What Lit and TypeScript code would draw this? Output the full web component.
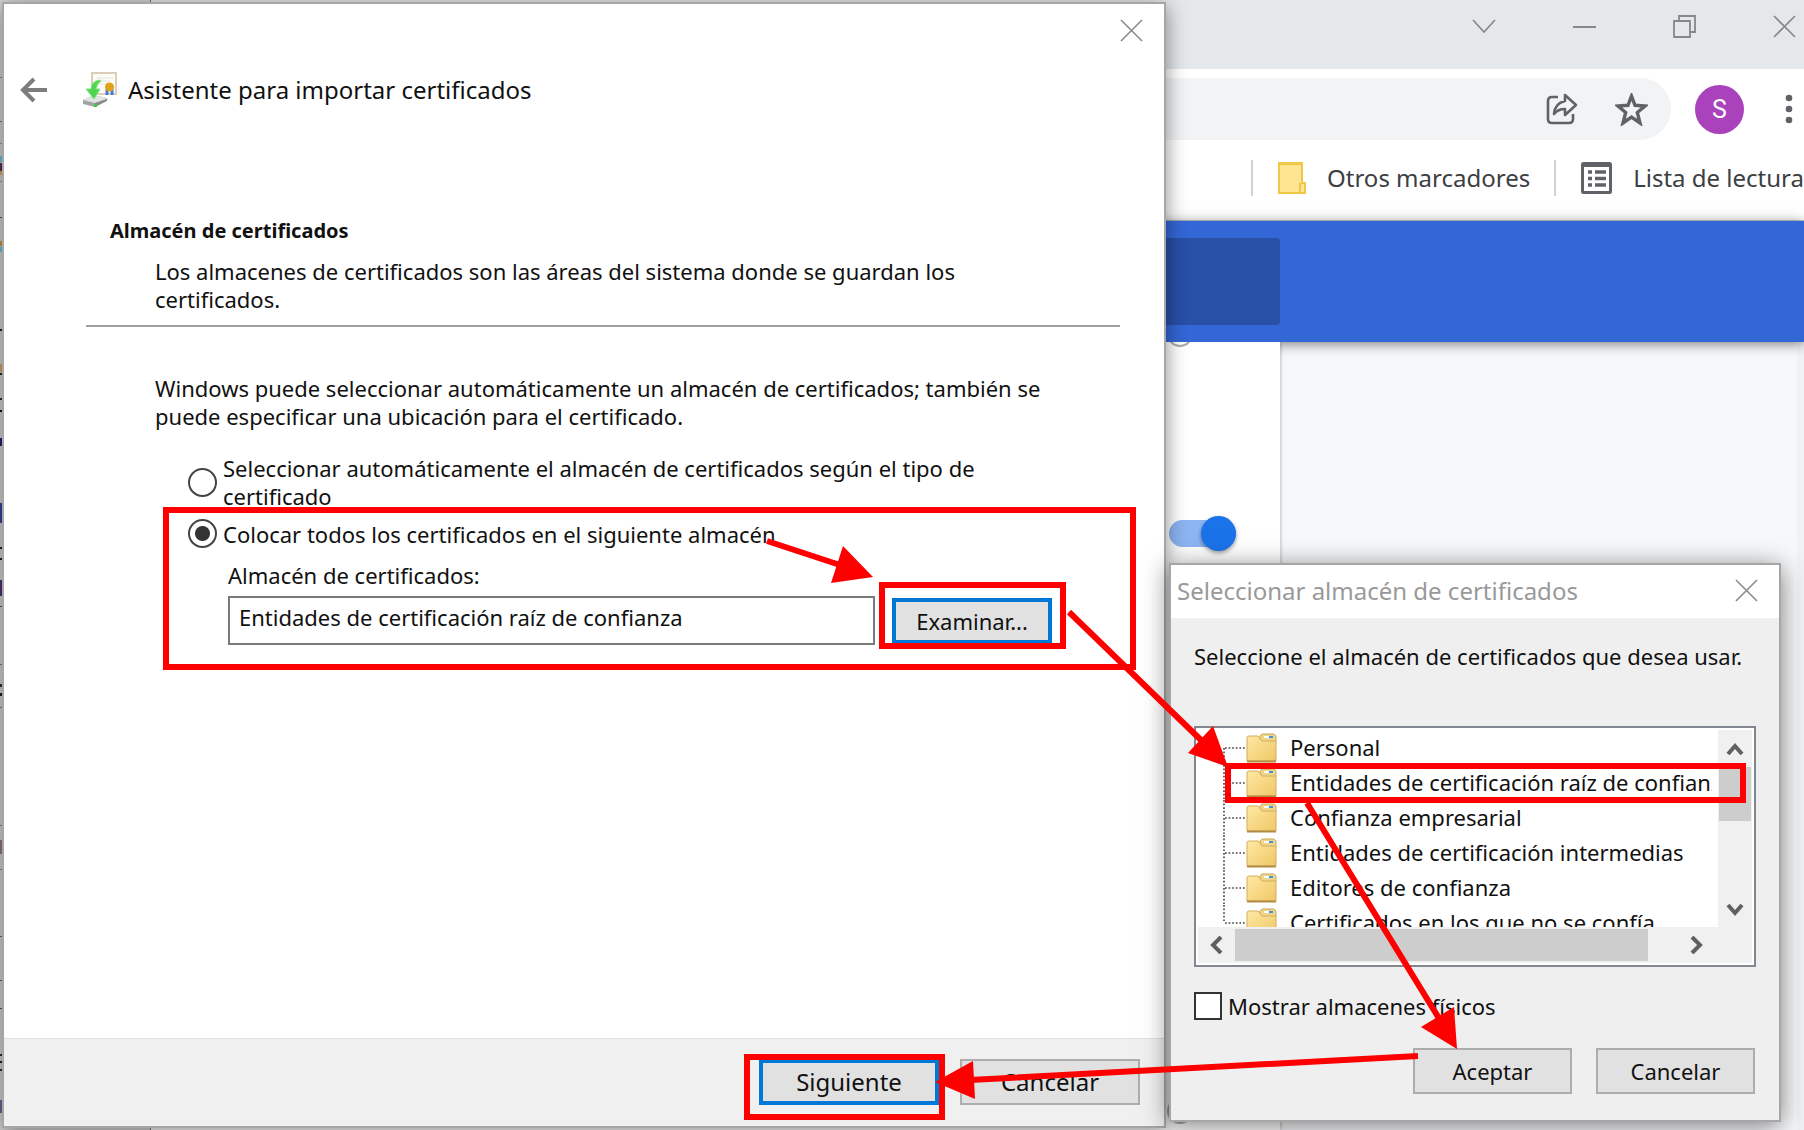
import { LitElement, html, css, svg } from "lit";
import { customElement, property } from "lit/decorators.js";

const closeIcon = html`<svg class="glyph" width="23" height="23" viewBox="0 0 23 23" aria-hidden="true">
  <path d="M1 1L22 22M22 1L1 22" fill="none" stroke="currentColor" stroke-width="1.6" />
</svg>`;

/* Edge of the document window that lies behind the wizard: [y, height, colour]. */
const edgeMarks: [number, number, string][] = [
  [77, 1, "#888"], [121, 1, "#777"], [143, 1, "#999"], [156, 6, "#6bc4dc"], [163, 8, "#63304a"],
  [171, 4, "#d9a860"], [181, 1, "#999"], [217, 1, "#555"], [241, 5, "#cf9443"], [247, 5, "#6bc4dc"],
  [329, 2, "#222"], [364, 8, "#cfa765"], [373, 2, "#222"], [398, 2, "#333"], [410, 2, "#111"],
  [438, 8, "#27246e"], [503, 20, "#3d42a0"], [547, 2, "#222"], [558, 2, "#222"], [580, 16, "#503070"],
  [606, 1, "#555"], [664, 1, "#777"], [684, 3, "#333"], [693, 3, "#222"], [707, 1, "#777"],
  [825, 1, "#888"], [840, 14, "#8f7a80"], [869, 1, "#888"], [936, 1, "#666"], [980, 1, "#666"],
  [1008, 1, "#555"], [1054, 2, "#333"], [1061, 2, "#222"], [1069, 2, "#333"], [1100, 13, "#6b6a90"],
];

@customElement("browser-window")
class BrowserWindow extends LitElement {
  static styles = css`
    :host {
      display: flex;
      flex-direction: column;
      min-height: 100vh;
      font-family: "Noto Sans", "Open Sans", sans-serif;
      color: #3c4043;
    }
    button {
      display: grid;
      place-items: center;
      padding: 0;
      border: 0;
      background: none;
      color: inherit;
      font: inherit;
    }
    svg { display: block; }
    .tabs {
      display: flex;
      justify-content: flex-end;
      gap: 77px;
      height: 69px;
      padding: 15px 8px 0 0;
      box-sizing: border-box;
      background: #e4e8eb;
      color: #858789;
      align-items: flex-start;
    }
    .toolbar {
      display: flex;
      align-items: center;
      height: 80px;
      background: #fff;
      color: #5f6368;
    }
    .address {
      flex: 1;
      display: flex;
      justify-content: flex-end;
      align-items: center;
      gap: 37px;
      height: 62px;
      padding-right: 23px;
      box-sizing: border-box;
      border-radius: 0 31px 31px 0;
      background: #f1f3f4;
    }
    .avatar {
      width: 49px;
      height: 49px;
      margin: 0 41px 0 24px;
      border-radius: 50%;
      background: #aa42bc;
      color: #fff;
      font-family: Roboto, sans-serif;
      font-size: 25px;
    }
    .menu { margin-right: 11px; }
    .bookmarks {
      display: flex;
      justify-content: flex-end;
      align-items: center;
      height: 72px;
      padding-bottom: 14px;
      box-sizing: border-box;
      border-bottom: 1px solid #c4c8cc;
      background: #fff;
      font-size: 24px;
      line-height: 32px;
      white-space: nowrap;
    }
    .bookmarks a {
      display: flex;
      align-items: center;
      gap: 21px;
      padding: 0 0 0 25px;
      height: 36px;
      box-sizing: border-box;
      border-left: 2px solid #d0d2d5;
      color: inherit;
      text-decoration: none;
    }
    .bookmarks .others { margin-right: 24px; }
    .appbar {
      position: relative;
      height: 121px;
      padding: 17px 0;
      box-sizing: border-box;
      background: #3367d6;
      box-shadow: 0 2px 12px rgba(0, 0, 0, 0.5);
    }
    .search {
      width: calc(100% - 524px);
      height: 87px;
      border-radius: 0 4px 4px 0;
      background: #2850a7;
    }
    .page {
      flex: 1;
      display: flex;
      background: #f7f8fa;
    }
    .card {
      flex: 1;
      display: flex;
      flex-direction: column;
      align-items: flex-end;
      background: #fff;
      box-shadow: 0 0 4px rgba(0, 0, 0, 0.35);
      clip-path: inset(0 -4px 0 0);
    }
    .ring {
      width: 26px;
      height: 26px;
      box-sizing: border-box;
      margin: -21px 87px 0 0;
      border: 2px solid #a9abae;
      border-radius: 50%;
    }
    .ring.last { margin: auto 87px 6px 0; }
    .switch {
      appearance: none;
      display: flex;
      flex: none;
      align-items: center;
      justify-content: flex-end;
      width: 67px;
      height: 27px;
      margin: 173px 44px 0 0;
      border-radius: 14px;
      background: #8cb5f2;
    }
    .switch::before {
      content: "";
      flex: none;
      width: 35px;
      height: 35px;
      border-radius: 50%;
      background: #1a73e8;
      box-shadow: 0 2px 4px rgba(0, 0, 0, 0.4);
    }
    .side {
      width: 524px;
      box-sizing: border-box;
      border-right: 7px solid #f1f2f3;
    }
  `;

  render() {
    return html`
      <div class="tabs">
        <button aria-label="Buscar pestañas"><svg width="24" height="23" viewBox="0 0 24 23"><path d="M1 5L12 17L23 5" fill="none" stroke="currentColor" stroke-width="1.6" /></svg></button>
        <button aria-label="Minimizar"><svg width="23" height="23" viewBox="0 0 23 23"><path d="M0 12H23" stroke="currentColor" stroke-width="2" /></svg></button>
        <button aria-label="Restaurar"><svg width="23" height="23" viewBox="0 0 23 23"><path d="M1 6H17V22H1ZM6 6V1H22V17H17" fill="none" stroke="currentColor" stroke-width="1.8" /></svg></button>
        <button aria-label="Cerrar">${closeIcon}</button>
      </div>
      <div class="toolbar">
        <div class="address">
          <button aria-label="Compartir"><svg width="32" height="32" viewBox="0 0 32 32"><path d="M12 4H6Q2 4 2 8V26Q2 30 6 30H23Q27 30 27 26V21" fill="none" stroke="currentColor" stroke-width="2.6" /><path d="M19 2L30 12L19 22V16Q12 16 8 21Q9 10 19 8Z" fill="none" stroke="currentColor" stroke-width="2.6" stroke-linejoin="round" /></svg></button>
          <button aria-label="Añadir a marcadores"><svg width="33" height="33" viewBox="0 0 33 33"><path d="M16.5 3L20 12.300L30 13L22.300 19.500L25 30L16.500 24L8 30L10.700 19.500L3 13L13 12.300Z" fill="none" stroke="currentColor" stroke-width="3.400" /></svg></button>
        </div>
        <button class="avatar" aria-label="Perfil">S</button>
        <button class="menu" aria-label="Menú"><svg width="8" height="32" viewBox="0 0 8 32"><g fill="currentColor"><circle cx="4" cy="5" r="3.300" /><circle cx="4" cy="16" r="3.300" /><circle cx="4" cy="27" r="3.300" /></g></svg></button>
      </div>
      <nav class="bookmarks">
        <a class="others" href="#otros"><svg width="28" height="32" viewBox="0 0 28 32"><path d="M1 1H24V21H27V31H1Z" fill="#fee591" stroke="#efc84a" stroke-width="2" /><path d="M1 2H24" stroke="#efc84a" stroke-width="2.500" /><path d="M22 30V22H24" fill="none" stroke="#efc84a" stroke-width="2" /></svg>Otros marcadores</a>
        <a href="#lectura"><svg width="31" height="32" viewBox="0 0 31 32"><rect x="1.500" y="1.500" width="28" height="29" rx="1" fill="none" stroke="#5f6368" stroke-width="3" /><path d="M2 3.500H29" stroke="#5f6368" stroke-width="3" /><path d="M7 10H11M14 10H25M7 16.500H11M14 16.500H25M7 23H11M14 23H25" stroke="#5f6368" stroke-width="3.400" /></svg>Lista de lectura</a>
      </nav>
      <div class="appbar"><div class="search"></div></div>
      <div class="page">
        <div class="card">
          <div class="ring"></div>
          <input class="switch" type="checkbox" checked aria-label="Activar" />
          <div class="ring last"></div>
        </div>
        <div class="side"></div>
      </div>
    `;
  }
}

const dialogStyles = css`
  :host {
    box-sizing: border-box;
    font-family: "Noto Sans", "Open Sans", sans-serif;
    font-size: 22px;
    line-height: 28px;
    color: #111;
    border: 2px solid #a6a6a6;
  }
  svg { display: block; }
  p, h1, h2, ul { margin: 0; padding: 0; font-weight: 400; }
  .icon-button {
    padding: 0;
    border: 0;
    background: none;
    color: #8b8b8b;
  }
  .push {
    height: 46px;
    padding: 0;
    box-sizing: border-box;
    border: 2px solid #adadad;
    background: #e1e1e1;
    color: #111;
    font: inherit;
  }
  .push.default { border: 4px solid #0078d7; }
`;

@customElement("import-wizard")
class ImportWizard extends LitElement {
  static styles = [
    dialogStyles,
    css`
      :host {
        display: flex;
        flex-direction: column;
        background: #fff;
        box-shadow: 0 4px 20px rgba(0, 0, 0, 0.45);
      }
      .titlebar {
        display: flex;
        justify-content: flex-end;
        height: 66px;
        padding: 15px 21px 0;
        box-sizing: border-box;
        align-items: flex-start;
      }
      .header {
        display: flex;
        align-items: center;
        height: 40px;
        padding-left: 16px;
      }
      .header h1 {
        font-size: 24px;
        line-height: 32px;
        margin-left: 10px;
      }
      .emblem { margin-left: 34px; }
      .content {
        flex: 1;
        padding: 107px 44px 0 82px;
      }
      .heading {
        padding-left: 24px;
        font-size: 20px;
        font-weight: 700;
      }
      .text { padding: 0 60px 0 69px; }
      .intro { padding-top: 12px; }
      .rule {
        border: 0;
        border-top: 2px solid #a0a0a0;
        margin: 12px 0 47px;
      }
      .options {
        display: flex;
        flex-direction: column;
        gap: 9px;
        padding: 24px 60px 0 102px;
      }
      .option {
        display: flex;
        align-items: center;
        gap: 6px;
      }
      .radio {
        appearance: none;
        flex: none;
        width: 29px;
        height: 29px;
        margin: 0;
        border: 2px solid #444;
        border-radius: 50%;
        background: #fff;
      }
      .radio:checked { background: radial-gradient(circle, #333 7px, #fff 8px); }
      .store {
        display: grid;
        grid-template-columns: 1fr 160px;
        column-gap: 17px;
        row-gap: 7px;
        padding: 13px 68px 0 142px;
        align-items: center;
      }
      .store label { grid-column: 1 / -1; }
      .field {
        width: 100%;
        height: 49px;
        padding: 0 9px 8px;
        box-sizing: border-box;
        border: 2px solid #7a7a7a;
        background: #fff;
        color: #111;
        font: inherit;
      }
      .footer {
        display: flex;
        justify-content: flex-end;
        gap: 21px;
        padding: 20px 24px 21px;
        border-top: 1px solid #dfdfdf;
        background: #f0f0f0;
      }
      .footer .push {
        width: 180px;
        font-size: 24px;
      }
    `,
  ];

  render() {
    return html`
      <div class="titlebar"><button class="icon-button" aria-label="Cerrar">${closeIcon}</button></div>
      <div class="header">
        <button class="icon-button" aria-label="Atrás"><svg width="28" height="26" viewBox="0 0 28 26"><path d="M27 13H3M14 2L3 13L14 24" fill="none" stroke="#7d7d7d" stroke-width="4" /></svg></button>
        <svg class="emblem" width="36" height="36" viewBox="0 0 36 36">
          <rect x="10" y="1" width="24" height="21" fill="#fcfbf8" stroke="#dccfb8" stroke-width="2" />
          <path d="M14 6H31M14 9H28M14 12H25" stroke="#e6e3dc" stroke-width="1" />
          <path d="M1 28L10 24L22 25L26 27L13 35L1 32Z" fill="#a2a5a5" />
          <path d="M1 28L10 24L22 25L25 27L13 31Z" fill="#e2e4e4" />
          <path d="M13 35V31L25 27V29Z" fill="#858989" />
          <path d="M17 8Q9 10 9 17H4L12 27L18 17H14Q15 11 19 9Z" fill="#4fd650" stroke="#7fe37c" stroke-width="1" />
          <path d="M25 17V23M30 17V23" stroke="#3c7ddb" stroke-width="3" />
          <circle cx="27.500" cy="15" r="4.500" fill="#e0a21a" />
          <rect x="12" y="32" width="3" height="3" fill="#3fc84a" />
        </svg>
        <h1>Asistente para importar certificados</h1>
      </div>
      <div class="content">
        <h2 class="heading">Almacén de certificados</h2>
        <p class="text intro">Los almacenes de certificados son las áreas del sistema donde se guardan los certificados.</p>
        <hr class="rule" />
        <p class="text">Windows puede seleccionar automáticamente un almacén de certificados; también se puede especificar una ubicación para el certificado.</p>
        <div class="options">
          <label class="option"><input class="radio" type="radio" name="mode" /><span>Seleccionar automáticamente el almacén de certificados según el tipo de certificado</span></label>
          <label class="option"><input class="radio" type="radio" name="mode" checked /><span>Colocar todos los certificados en el siguiente almacén</span></label>
        </div>
        <div class="store">
          <label for="store">Almacén de certificados:</label>
          <input class="field" id="store" type="text" value="Entidades de certificación raíz de confianza" />
          <button class="push default">Examinar...</button>
        </div>
      </div>
      <div class="footer">
        <button class="push default">Siguiente</button>
        <button class="push">Cancelar</button>
      </div>
    `;
  }
}

@customElement("store-picker")
class StorePicker extends LitElement {
  @property({ attribute: false }) stores: string[] = [
    "Personal",
    "Entidades de certificación raíz de confianza",
    "Confianza empresarial",
    "Entidades de certificación intermedias",
    "Editores de confianza",
    "Certificados en los que no se confía",
  ];

  static styles = [
    dialogStyles,
    css`
      :host {
        display: flex;
        flex-direction: column;
        background: #efefef;
        box-shadow: 0 4px 24px rgba(0, 0, 0, 0.5);
      }
      .titlebar {
        display: flex;
        justify-content: space-between;
        align-items: center;
        height: 53px;
        padding: 0 21px 2px 6px;
        box-sizing: border-box;
        background: #fff;
      }
      .titlebar h1 {
        font-size: 24px;
        line-height: 32px;
        color: #999;
      }
      .body { padding: 24px 23px 0; }
      .frame {
        display: grid;
        grid-template-columns: 1fr 34px;
        grid-template-rows: 197px 36px;
        margin-top: 56px;
        padding: 2px;
        border: 2px solid #828790;
        background: #fff;
      }
      .tree {
        overflow: hidden;
        list-style: none;
        margin-right: 6px;
        padding-left: 25px;
        white-space: nowrap;
      }
      .tree li {
        display: flex;
        align-items: center;
        height: 35px;
        line-height: 35px;
      }
      .tree .folder { margin-right: 13px; }
      .tree li svg { flex: none; }
      .vbar {
        display: flex;
        flex-direction: column;
        align-items: center;
        justify-content: space-between;
        padding: 12px 0 10px;
        background: #f0f0f0;
      }
      .vbar .thumb {
        width: 32px;
        height: 54px;
        margin: 11px 0 auto;
        background: #cdcdcd;
      }
      .hbar {
        grid-column: 1 / -1;
        display: flex;
        align-items: center;
        padding: 0 48px 0 11px;
        background: #f0f0f0;
      }
      .hbar .thumb {
        flex: 1;
        height: 32px;
        margin: 0 42px 0 12px;
        background: #cdcdcd;
      }
      .check {
        display: flex;
        align-items: center;
        gap: 6px;
        margin-top: 25px;
      }
      .check input {
        appearance: none;
        width: 28px;
        height: 28px;
        margin: 0;
        border: 2px solid #333;
        background: #fff;
      }
      .actions {
        display: flex;
        justify-content: flex-end;
        gap: 24px;
        margin-top: 28px;
        padding-right: 1px;
      }
      .actions .push { width: 159px; }
    `,
  ];

  private arrow(points: string, w: number, h: number) {
    return html`<svg width=${w} height=${h} viewBox="0 0 ${w} ${h}" aria-hidden="true"><path d=${points} fill="none" stroke="#606060" stroke-width="4" /></svg>`;
  }

  render() {
    return html`
      <div class="titlebar">
        <h1>Seleccionar almacén de certificados</h1>
        <button class="icon-button" aria-label="Cerrar">${closeIcon}</button>
      </div>
      <div class="body">
        <p>Seleccione el almacén de certificados que desea usar.</p>
        <div class="frame">
          <ul class="tree" role="tree" aria-label="Almacenes">
            ${this.stores.map(
              (name, i) => html`<li role="treeitem">
                <svg width="23" height="35" viewBox="0 0 23 35"><path d="M1 ${i === 0 ? 18 : 0}V${i === this.stores.length - 1 ? 18 : 35}M2 18H23" fill="none" stroke="#444" stroke-width="1.600" stroke-dasharray="1.700 1.900" /></svg>
                <svg class="folder" width="31" height="30" viewBox="0 0 31 30">
                  <defs><linearGradient id="f" x1="0" y1="0" x2="1" y2="1"><stop offset="0" stop-color="#ffe9a4" /><stop offset="1" stop-color="#efc766" /></linearGradient></defs>
                  <path d="M14 9V3L16 1H28L30 3V9Z" fill="#efd58c" stroke="#cda957" />
                  <rect x="18" y="3" width="5" height="2" fill="#fff" /><rect x="23" y="3" width="4" height="2" fill="#3d93dd" />
                  <path d="M1 4L3 3H12L16 8H30V28H1Z" fill="url(#f)" stroke="#d3ad5b" />
                  <path d="M1 28.500H30" stroke="#b08c45" stroke-width="2" />
                </svg><span>${name}</span></li>`
            )}
          </ul>
          <div class="vbar">
            ${this.arrow("M2 12L9 4L16 12", 18, 14)}
            <div class="thumb"></div>
            ${this.arrow("M2 2L9 10L16 2", 18, 14)}
          </div>
          <div class="hbar">
            ${this.arrow("M12 1L4 9L12 17", 14, 18)}
            <div class="thumb"></div>
            ${this.arrow("M2 1L10 9L2 17", 14, 18)}
          </div>
        </div>
        <label class="check"><input type="checkbox" />Mostrar almacenes físicos</label>
        <div class="actions">
          <button class="push">Aceptar</button>
          <button class="push">Cancelar</button>
        </div>
      </div>
    `;
  }
}

@customElement("app-root")
class AppRoot extends LitElement {
  static styles = css`
    :host {
      display: block;
      position: relative;
      min-height: 100vh;
      overflow: hidden;
    }
    .behind {
      position: absolute;
      top: 0;
      left: 0;
      width: 151px;
      height: 100%;
      box-sizing: border-box;
      border-right: 1px solid #777;
      background: #d4d4d4;
    }
    .behind svg { display: block; }
    .wizard {
      position: absolute;
      inset: 2px 638px 2px 2px;
    }
    .picker {
      position: absolute;
      right: 23px;
      bottom: 8px;
      width: 612px;
      height: 559px;
    }
    .notes {
      position: absolute;
      inset: 0;
      width: 100%;
      height: 100%;
      pointer-events: none;
    }
  `;

  render() {
    return html`
      <browser-window></browser-window>
      <div class="behind">
        <svg width="3" height="1130" viewBox="0 0 3 1130" aria-hidden="true">
          ${edgeMarks.map(([y, h, c]) => svg`<rect x="0" y=${y} width="3" height=${h} fill=${c} />`)}
        </svg>
      </div>
      <import-wizard class="wizard"></import-wizard>
      <store-picker class="picker"></store-picker>
      <svg class="notes" viewBox="0 0 1804 1130" preserveAspectRatio="none" aria-hidden="true">
        <g fill="none" stroke="#f00" stroke-width="6">
          <rect x="166" y="510" width="967" height="157" />
          <rect x="882" y="585" width="181" height="61" />
          <rect x="747" y="1057" width="195" height="60" />
          <rect x="1228" y="766" width="515" height="34" />
          <path d="M767 541L840 565M1069 612L1204 743M1307 803L1440 1020M1418 1056L970 1080" />
        </g>
        <g fill="#f00">
          <path d="M873 577L843 546L831 583Z" />
          <path d="M1228 767L1213 726L1188 753Z" />
          <path d="M1457 1049L1454 1007L1421 1027Z" />
          <path d="M935 1082L973 1061L975 1099Z" />
        </g>
      </svg>
    `;
  }
}
